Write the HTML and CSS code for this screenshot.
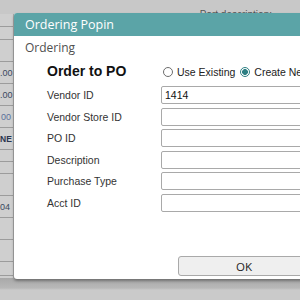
FILE: index.html
```html
<!DOCTYPE html>
<html>
<head>
<meta charset="utf-8">
<link rel="stylesheet" href="styles.css">
</head>
<body>
<div class="screen">
  <div class="bg-top"><span class="part-desc">Part description:</span></div>
  <div class="bg-table">
    <div class="row r1"></div>
    <div class="row r2"></div>
    <div class="row r3"></div>
    <div class="row r4"><span class="cell num">.00</span></div>
    <div class="row r5"><span class="cell num">.00</span></div>
    <div class="row r6"><span class="cell blue">00</span></div>
    <div class="row r7"><span class="cell navy">NE</span></div>
    <div class="row r8"></div>
    <div class="row r9"></div>
    <div class="row r10"></div>
    <div class="row r11"><span class="cell num">04</span></div>
    <div class="row r12"></div>
    <div class="row r13"></div>
    <div class="row r14"></div>
  </div>
  <div class="bg-footer"></div>

  <div class="dialog">
    <div class="dialog-title">Ordering Popin</div>
    <div class="dialog-body">
      <div class="section-title">Ordering</div>
      <div class="form">
        <div class="heading">Order to PO</div>
        <div class="radios">
          <label class="radio"><input type="radio" name="mode"><span>Use Existing</span></label>
          <label class="radio"><input type="radio" name="mode" checked><span>Create New</span></label>
        </div>
        <label class="label">Vendor ID</label>
        <input class="field" type="text" value="1414">
        <label class="label">Vendor Store ID</label>
        <input class="field" type="text">
        <label class="label">PO ID</label>
        <input class="field" type="text">
        <label class="label">Description</label>
        <input class="field" type="text">
        <label class="label">Purchase Type</label>
        <input class="field" type="text">
        <label class="label">Acct ID</label>
        <input class="field" type="text">
      </div>
      <div class="actions">
        <button class="ok">OK</button>
      </div>
    </div>
  </div>
</div>
</body>
</html>
```

FILE: styles.css
```css
* { box-sizing: border-box; }
html, body { margin: 0; padding: 0; }
body { width: 300px; height: 300px; overflow: hidden; background: #c6c6c6; font-family: "Liberation Sans", Arial, sans-serif; }

.screen { position: relative; width: 300px; height: 300px; overflow: hidden; display: flex; flex-direction: column; background: #c4c4c4; }

.bg-top { height: 14px; background: #c8c8c8; display: flex; justify-content: flex-end; align-items: flex-end; padding-right: 28px; }
.part-desc { font-size: 10px; color: #555; line-height: 10px; margin-bottom: -6px; }

.bg-table { width: 14px; display: flex; flex-direction: column; background: #cfcfcf; border-right: 1px solid #a8a8a8; flex: 0 0 auto; height: 264px; }
.row { border-bottom: 1px solid #9c9c9c; overflow: hidden; display: flex; align-items: center; white-space: nowrap; }
.r1 { height: 13px; }
.r2 { height: 13px; }
.r3 { height: 22px; }
.r4 { height: 22px; }
.r5 { height: 22px; }
.r6 { height: 22px; }
.r7 { height: 22px; }
.r8 { height: 12px; }
.r9 { height: 12px; }
.r10 { height: 22px; }
.r11 { height: 22px; }
.r12 { height: 22px; }
.r13 { height: 22px; }
.r14 { height: 14px; }
.cell { font-size: 9px; margin-left: 0; }
.num { color: #3a4a60; }
.blue { color: #5a6f9a; margin-left: 1px; }
.navy { color: #2a3550; font-weight: bold; font-size: 8.5px; }

.bg-footer { flex: 1; background: linear-gradient(#a9a9a9, #b8b8b8 10px, #cacaca 12px, #cacaca); }

.dialog {
  position: absolute; left: 14px; top: 13px; width: 300px; height: 266px;
  background: #fff; border-radius: 3px 0 0 3px;
  box-shadow: 0 2px 3px rgba(0,0,0,0.35);
  display: flex; flex-direction: column;
}
.dialog-title {
  height: 23px; background: #5ba4a7; color: #fff; border-radius: 3px 0 0 0;
  font-family: "Open Sans", "Noto Sans", sans-serif; font-size: 12.5px;
  display: flex; align-items: center; padding-left: 11px;
}
.dialog-body { flex: 1; display: flex; flex-direction: column; padding: 3px 0 0 11px; }
.section-title { font-family: "Open Sans", "Noto Sans", sans-serif; font-size: 12px; color: #505050; line-height: 17px; }
.form {
  display: grid; grid-template-columns: 114px 1fr; row-gap: 3.5px;
  padding-left: 22px; margin-top: 6px; align-items: center;
  font-size: 10.5px; color: #333;
}
.heading { font-weight: bold; font-size: 14px; color: #111; height: 18px; line-height: 18px; margin-bottom: 2.5px; }
.radios { display: flex; align-items: center; gap: 5px; margin-left: 2px; margin-bottom: 2.5px; height: 18px; padding-top: 2px; }
.radio { display: flex; align-items: center; gap: 4px; white-space: nowrap; font-size: 10.5px; color: #222; }
.radio input {
  appearance: none; -webkit-appearance: none; margin: 0; width: 10px; height: 10px;
  border: 1px solid #6d6d6d; border-radius: 50%; background: #fff;
}
.radio input:checked { border-color: #2d7f83; background: radial-gradient(circle, #2d7f83 0 2.6px, #fff 3.2px); }
.label { line-height: 18px; color: #333; }
.field {
  height: 18px; width: 200px; margin: 0; border: 1px solid #a9a9a9; border-radius: 2px;
  padding: 0 3px; font-family: "Liberation Sans", Arial, sans-serif; font-size: 10.5px; color: #111; background: #fff;
}
.actions { margin-top: auto; margin-bottom: 3px; padding-left: 153px; }
.ok {
  width: 132px; height: 20px; margin: 0; border: 1px solid #a9a9a9; border-radius: 3px; background: #efefef;
  font-family: "Open Sans", "Noto Sans", sans-serif; font-size: 11.5px; color: #222; padding: 0;
}
```
